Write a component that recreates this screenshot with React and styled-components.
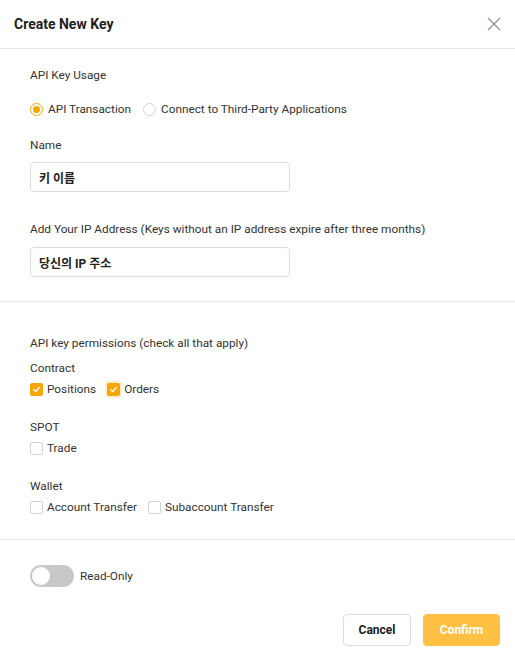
import React, { useState } from "react";
import styled, { createGlobalStyle } from "styled-components";

const GlobalStyle = createGlobalStyle`
  html, body {
    margin: 0;
    padding: 0;
    background: #ffffff;
  }
  body {
    font-family: Roboto, "Noto Sans CJK KR", "Liberation Sans", sans-serif;
    color: #333333;
  }
`;

const Modal = styled.div`
  width: 515px;
  height: 653px;
  background: #fff;
  display: flex;
  flex-direction: column;
`;

const Header = styled.div`
  height: 48px;
  display: flex;
  align-items: center;
  justify-content: space-between;
  padding: 0 14px;
  border-bottom: 1px solid #e6e6e6;
`;

const Title = styled.h2`
  margin: 0;
  font-size: 14px;
  font-weight: 700;
  color: #212121;
`;

const CloseButton = styled.button`
  border: none;
  background: none;
  padding: 0;
  width: 14px;
  height: 14px;
  display: flex;
  color: #8c8c8c;
  cursor: pointer;
`;

const Section = styled.div`
  padding: ${(p) => p.$padding};
  border-bottom: ${(p) => (p.$divider ? "1px solid #e6e6e6" : "none")};
  display: flex;
  flex-direction: column;
`;

const Label = styled.div`
  font-size: 11.8px;
  line-height: 16px;
  color: #333;
  margin-bottom: ${(p) => p.$gap || 0}px;
`;

const Row = styled.div`
  display: flex;
  align-items: center;
  gap: ${(p) => p.$gap || 10}px;
  margin-bottom: ${(p) => p.$mb || 0}px;
`;

const Option = styled.label`
  display: flex;
  align-items: center;
  gap: ${(p) => (p.$radio ? 5 : 4)}px;
  font-size: 11.8px;
  line-height: 18px;
  color: #333;
  cursor: pointer;
`;

const RadioDot = styled.span`
  width: 13px;
  height: 13px;
  box-sizing: border-box;
  border-radius: 50%;
  border: 1px solid ${(p) => (p.$on ? "#f7a600" : "#d4d4d4")};
  display: flex;
  align-items: center;
  justify-content: center;
  &::after {
    content: "";
    width: 7px;
    height: 7px;
    border-radius: 50%;
    background: ${(p) => (p.$on ? "#f7a600" : "transparent")};
  }
`;

const Box = styled.span`
  width: 13px;
  height: 13px;
  box-sizing: border-box;
  border-radius: 2px;
  border: 1px solid ${(p) => (p.$on ? "#f7a600" : "#d4d4d4")};
  background: ${(p) => (p.$on ? "#f7a600" : "#fff")};
  box-shadow: ${(p) => (p.$focus ? "0 0 0 2px rgba(247,166,0,0.2)" : "none")};
  display: flex;
  align-items: center;
  justify-content: center;
`;

const Input = styled.div`
  width: 260px;
  height: 30px;
  box-sizing: border-box;
  border: 1px solid #dcdcdc;
  border-radius: 4px;
  padding: 0 8px;
  display: flex;
  align-items: center;
  font-size: 12px;
  font-weight: 700;
  color: #212121;
  margin-bottom: ${(p) => p.$mb || 0}px;
`;

const Toggle = styled.span`
  width: 44px;
  height: 22px;
  border-radius: 11px;
  background: #c8c8c8;
  display: flex;
  align-items: center;
  padding: 2px;
  box-sizing: border-box;
  &::after {
    content: "";
    width: 18px;
    height: 18px;
    border-radius: 50%;
    background: #fff;
  }
`;

const Footer = styled.div`
  display: flex;
  justify-content: flex-end;
  gap: 12px;
  padding: 0 15px 0 0;
`;

const Button = styled.button`
  height: 32px;
  padding: 0;
  width: ${(p) => (p.$primary ? 77 : 68)}px;
  border-radius: 4px;
  border: 1px solid ${(p) => (p.$primary ? "#ffc043" : "#dcdcdc")};
  background: ${(p) => (p.$primary ? "#ffc043" : "#fff")};
  color: ${(p) => (p.$primary ? "#fff" : "#212121")};
  font-family: inherit;
  font-size: 12px;
  font-weight: 700;
  cursor: pointer;
`;

const Check = () => (
  <svg width="9" height="9" viewBox="0 0 10 10">
    <path d="M2 5.2 L4.2 7.2 L8 2.8" fill="none" stroke="#fff" strokeWidth="1.6" strokeLinecap="round" strokeLinejoin="round" />
  </svg>
);

function Checkbox({ on, focus, children }) {
  return (
    <Option>
      <Box $on={on} $focus={focus}>{on && <Check />}</Box>
      {children}
    </Option>
  );
}

export default function App() {
  const [usage, setUsage] = useState("api");

  return (
    <>
      <GlobalStyle />
      <Modal>
        <Header>
          <Title>Create New Key</Title>
          <CloseButton aria-label="close">
            <svg width="14" height="14" viewBox="0 0 14 14">
              <path d="M1 1 L13 13 M13 1 L1 13" stroke="currentColor" strokeWidth="1.1" />
            </svg>
          </CloseButton>
        </Header>

        <Section $padding="18px 30px 24px" $divider>
          <Label $gap={17}>API Key Usage</Label>
          <Row $gap={12} $mb={19}>
            <Option $radio onClick={() => setUsage("api")}>
              <RadioDot $on={usage === "api"} />
              API Transaction
            </Option>
            <Option $radio onClick={() => setUsage("third")}>
              <RadioDot $on={usage === "third"} />
              Connect to Third-Party Applications
            </Option>
          </Row>
          <Label $gap={9}>Name</Label>
          <Input $mb={29}>키 이름</Input>
          <Label $gap={10}>Add Your IP Address (Keys without an IP address expire after three months)</Label>
          <Input>당신의 IP 주소</Input>
        </Section>

        <Section $padding="33px 30px 23px" $divider>
          <Label $gap={9}>API key permissions (check all that apply)</Label>
          <Label $gap={4}>Contract</Label>
          <Row $gap={11} $mb={21}>
            <Checkbox on>Positions</Checkbox>
            <Checkbox on focus>Orders</Checkbox>
          </Row>
          <Label $gap={4}>SPOT</Label>
          <Row $mb={21}>
            <Checkbox>Trade</Checkbox>
          </Row>
          <Label $gap={4}>Wallet</Label>
          <Row $gap={11}>
            <Checkbox>Account Transfer</Checkbox>
            <Checkbox>Subaccount Transfer</Checkbox>
          </Row>
        </Section>

        <Section $padding="25px 30px 27px">
          <Row $gap={6}>
            <Toggle />
            <Label>Read-Only</Label>
          </Row>
        </Section>

        <Footer>
          <Button>Cancel</Button>
          <Button $primary>Confirm</Button>
        </Footer>
      </Modal>
    </>
  );
}
